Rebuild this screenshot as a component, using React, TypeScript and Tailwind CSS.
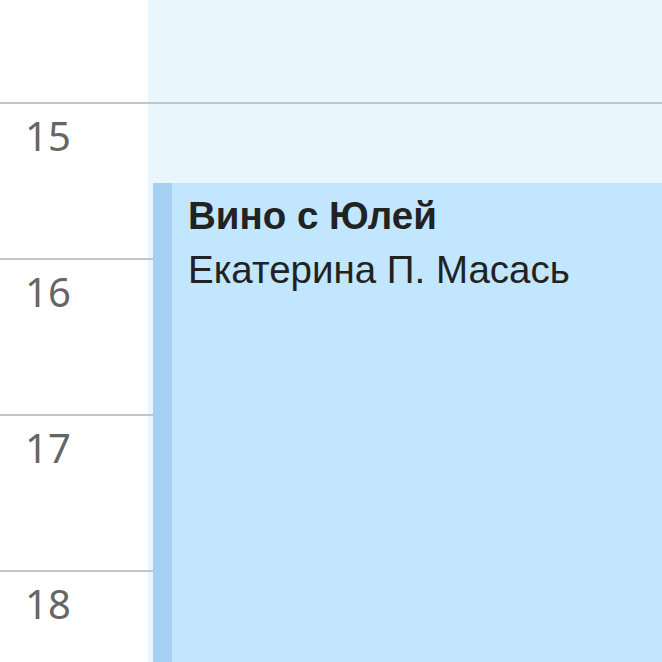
import React from "react";

const hours = ["15", "16", "17", "18"];

const App: React.FC = () => {
  return (
    <div className="relative w-[662px] h-[662px] overflow-hidden bg-white" style={{ fontFamily: "'Liberation Sans', Arial, sans-serif" }}>
      {/* top partial row */}
      <div className="flex h-[102px]">
        <div className="w-[148px] bg-white" />
        <div className="flex-1 bg-[#eaf6fd]" />
      </div>
      {hours.map((h) => (
        <div key={h} className="flex h-[156px] border-t-2 border-[#c6c6c6]">
          <div className="w-[148px] bg-white pl-[25px] pt-[12px]">
            <span className="text-[40px] leading-none text-[#666666]" style={{ fontFamily: "'Noto Sans', 'Open Sans', sans-serif" }}>
              {h}
            </span>
          </div>
          <div className="flex-1 bg-[#eaf6fd]" />
        </div>
      ))}

      {/* event block */}
      <div className="absolute left-[153px] top-[183px] right-0 bottom-0 flex bg-[#c1e6fd]">
        <div className="w-[19px] bg-[#a6d0f2]" />
        <div className="pl-[16px] pt-[6px] text-[#222222]">
          <div className="text-[38.5px] font-bold leading-[54px]">Вино с Юлей</div>
          <div className="text-[38.5px] leading-[54px]">Екатерина П. Масась</div>
        </div>
      </div>
    </div>
  );
};

export default App;
